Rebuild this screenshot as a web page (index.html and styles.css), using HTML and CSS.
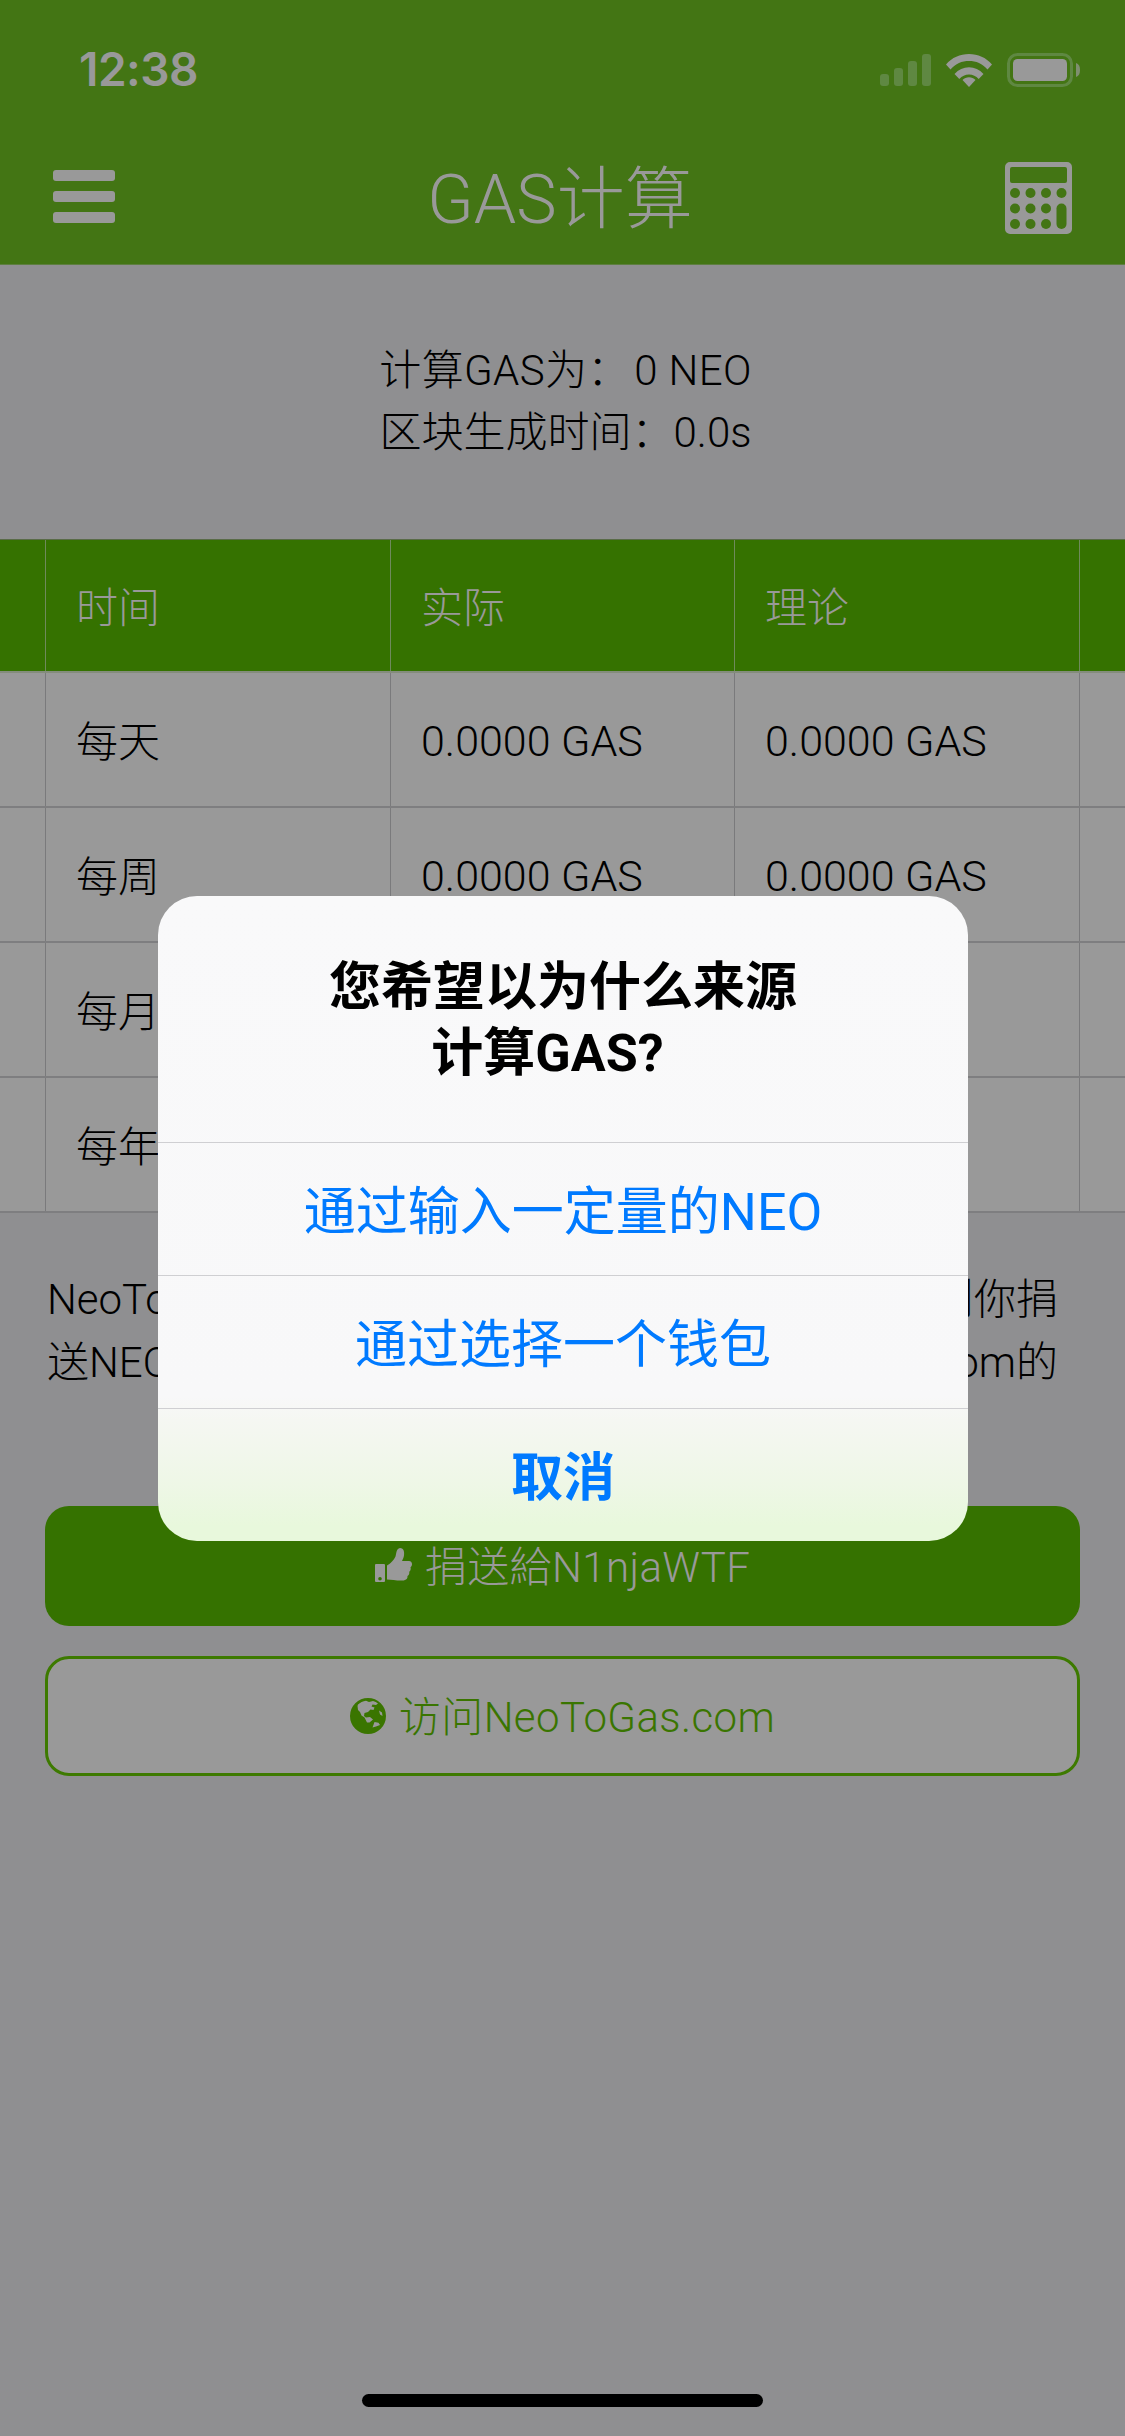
FILE: index.html
```html
<!DOCTYPE html>
<html lang="zh-CN">
<head>
<meta charset="utf-8">
<title>GAS计算</title>
<link rel="stylesheet" href="styles.css">
</head>
<body>
<div class="app">
  <header class="topbar">
    <div class="status">
      <span class="clock">12:38</span>
      <div class="status-icons">
        <svg class="signal" width="51" height="32" viewBox="0 0 51 32"><rect x="0" y="20" width="9" height="12" rx="3"/><rect x="14" y="14" width="9" height="18" rx="3"/><rect x="28" y="7" width="9" height="25" rx="3"/><rect x="42" y="0" width="9" height="32" rx="3"/></svg>
        <svg class="wifi" width="46" height="34" viewBox="0 0 46 34"><path d="M0 11.500C6 4.500 14 1 23 1s17 3.500 23 10.500l-4.500 5C36.500 10.500 30 8 23 8S9.500 10.500 4.500 16.500z"/><path d="M8.500 21C12.500 16.500 17.500 14.200 23 14.200S33.500 16.500 37.500 21l-4.800 5C30 23 26.800 21.500 23 21.500S16 23 13.300 26z"/><path d="M16.500 30c1.800-1.900 4-2.800 6.500-2.800s4.700.9 6.500 2.800L23 37z" transform="translate(0 -3)"/></svg>
        <svg class="battery" width="74" height="34" viewBox="0 0 74 34"><rect class="battery-shell" x="1.500" y="1.500" width="63" height="31" rx="9"/><rect class="battery-fill" x="6" y="6" width="54" height="22" rx="4.500"/><path class="battery-tip" d="M69 10c3 1 4 3.500 4 7s-1 6-4 7z"/></svg>
      </div>
    </div>
    <div class="navbar">
      <div class="menu-icon"><span></span><span></span><span></span></div>
      <h1 class="title">GAS计算</h1>
      <svg class="calc-icon" width="67" height="72" viewBox="0 0 67 72">
        <path fill-rule="evenodd" d="M5 0h57a5 5 0 0 1 5 5v62a5 5 0 0 1-5 5H5a5 5 0 0 1-5-5V5a5 5 0 0 1 5-5zM7 5a2 2 0 0 0-2 2v12a2 2 0 0 0 2 2h53a2 2 0 0 0 2-2V7a2 2 0 0 0-2-2z"/>
        <g class="calc-keys">
          <circle cx="10" cy="31" r="5"/><circle cx="25.500" cy="31" r="5"/><circle cx="41" cy="31" r="5"/><circle cx="56.500" cy="31" r="5"/>
          <circle cx="10" cy="46.500" r="5"/><circle cx="25.500" cy="46.500" r="5"/><circle cx="41" cy="46.500" r="5"/>
          <circle cx="10" cy="62" r="5"/><circle cx="25.500" cy="62" r="5"/><circle cx="41" cy="62" r="5"/>
          <rect x="51.500" y="41.500" width="10" height="25.500" rx="5"/>
        </g>
      </svg>
    </div>
  </header>

  <section class="summary">
    <p class="summary-gas">计算GAS为：&#8202;0 NEO</p>
    <p>区块生成时间：0.0s</p>
  </section>

  <section class="table">
    <div class="row head">
      <div class="cell"></div><div class="cell cell-zh">时间</div><div class="cell cell-zh">实际</div><div class="cell cell-zh">理论</div><div class="cell"></div>
    </div>
    <div class="row">
      <div class="cell"></div><div class="cell cell-zh">每天</div><div class="cell cell-num">0.0000 GAS</div><div class="cell cell-num">0.0000 GAS</div><div class="cell"></div>
    </div>
    <div class="row">
      <div class="cell"></div><div class="cell cell-zh">每周</div><div class="cell cell-num">0.0000 GAS</div><div class="cell cell-num">0.0000 GAS</div><div class="cell"></div>
    </div>
    <div class="row">
      <div class="cell"></div><div class="cell cell-zh">每月</div><div class="cell"></div><div class="cell"></div><div class="cell"></div>
    </div>
    <div class="row">
      <div class="cell"></div><div class="cell cell-zh">每年</div><div class="cell"></div><div class="cell"></div><div class="cell"></div>
    </div>
  </section>

  <section class="note">
    <div class="note-line"><span>NeoToGas计算器免费。</span><span>如果觉得它有用，则你捐</span></div>
    <div class="note-line"><span>送NEO以支持开发，</span><span>详情请见NeoToGas.com的</span></div>
  </section>

  <section class="actions">
    <a class="btn btn-solid">
      <svg width="37" height="37" viewBox="0 0 37 37"><path fill-rule="evenodd" d="M1 16h8a1 1 0 0 1 1 1v16a1 1 0 0 1-1 1H1a1 1 0 0 1-1-1V17a1 1 0 0 1 1-1zm4 13a1.800 1.800 0 1 0 0 3.600A1.800 1.800 0 0 0 5 29z"/><path d="M12 17.500c3-1.500 7-5.500 8.500-9C21.500 5.500 21 1 25 0c4 .2 4.500 4 4 7.500-.3 2-1.300 4-2 5.500h7c2 0 3 1.500 3 3.200 0 1.300-.7 2.400-1.500 3 .6 1.900 0 3.500-1.300 4.500.4 1.900-.2 3.500-1.700 4.400.2 2.400-1 4-3.700 4.300C23 33 17 31.500 12 31.500z"/></svg>
      <span class="btn-label">捐送給N1njaWTF</span>
    </a>
    <a class="btn btn-outline">
      <svg width="36" height="36" viewBox="0 0 36 36"><path fill-rule="evenodd" d="M18 0a18 18 0 1 1 0 36 18 18 0 0 1 0-36zM8 6.500c2-2 5-3.500 8-3.800l3 1.300 4-1c2 .6 3.500 1.300 5 2.500l-2 1.500-3.500-.5-1 2 3 1-1 2.500-3-.5-2.500 2.500-3.500 1-.5 3 2 1.500 4-.5 3 2.500-3.500 3-2.500 0-2.500-5-3-2-1.500-3.500-2-2-.5-4zM24.500 24l4 .7 1.500 2.300-4 1.500-3.500 1zM29 12.500l3 2 .5 3.500-2.500-1.500z"/></svg>
      <span class="btn-label">访问NeoToGas.com</span>
    </a>
  </section>

  <div class="home-indicator"></div>

  <div class="alert">
    <div class="alert-title">您希望以为什么来源<br>计算GAS?&nbsp;&nbsp;&#8202;</div>
    <div class="alert-action">通过输入一定量的NEO</div>
    <div class="alert-action">通过选择一个钱包</div>
    <div class="alert-action alert-cancel">取消</div>
  </div>
</div>
</body>
</html>
```

FILE: styles.css
```css
* { box-sizing: border-box; }
html, body { margin: 0; padding: 0; }
body {
  width: 1125px;
  height: 2436px;
  overflow: hidden;
  font-family: Roboto, "Noto Sans CJK SC", sans-serif;
  font-weight: 300;
  color: #000;
  background: #8f8f91;
}
.app {
  position: relative;
  width: 1125px;
  height: 2436px;
  display: flex;
  flex-direction: column;
  background: #8f8f91;
  overflow: hidden;
}
.topbar {
  height: 265px;
  flex: none;
  background: #437514;
  border-bottom: 1px solid #5e7f40;
  color: #999;
}
.status {
  height: 132px;
  padding: 5px 44px 0 79px;
  display: flex;
  align-items: center;
  justify-content: space-between;
}
.clock { font-family: Inter, sans-serif; font-size: 46px; font-weight: 600; letter-spacing: -0.5px; }
.status-icons { display: flex; align-items: center; gap: 15px; margin-top: 3px; }
.signal { fill: #5f8842; }
.wifi { fill: #999; }
.battery-shell { fill: none; stroke: #5f8842; stroke-width: 3; }
.battery-fill { fill: #999; }
.battery-tip { fill: #7f8f70; }
.navbar {
  height: 132px;
  padding: 0 53px;
  display: flex;
  align-items: center;
  justify-content: space-between;
}
.menu-icon { width: 62px; display: flex; flex-direction: column; gap: 10px; margin-top: -4px; }
.menu-icon span { height: 11px; border-radius: 3px; background: #999; }
.title { margin: 0; padding-top: 3px; font-size: 68px; font-weight: 300; line-height: 1; }
.calc-icon { fill: #999; }
.calc-keys { fill: #437514; }

.summary {
  height: 274px;
  flex: none;
  padding-left: 6px;
  display: flex;
  flex-direction: column;
  justify-content: center;
  align-items: center;
  font-size: 42px;
  line-height: 62px;
}
.summary p { margin: 0; }
.summary-gas { letter-spacing: 0.35px; }

.table { flex: none; border-top: 1px solid #596b47; }
.row {
  height: 135px;
  display: grid;
  grid-template-columns: 45px 345px 344px 345px 46px;
  border-bottom: 2px solid #7e7e80;
  background: #999;
  font-size: 42px;
}
.row.head { height: 133px; background: #357200; color: #999; border-bottom-color: #848d7c; }
.cell {
  display: flex;
  align-items: center;
  padding-left: 31px;
  border-left: 1px solid #7a7a7c;
}
.cell:first-child { border-left: none; padding: 0; }
.cell-zh { padding-left: 30px; padding-bottom: 3px; }
.cell-num { padding-left: 30px; padding-top: 2px; font-size: 43px; }
.head .cell { border-left-color: #6f8a5c; }

.note {
  flex: none;
  padding: 55px 67px 0 47px;
  height: 293px;
  font-size: 42px;
  line-height: 63px;
}
.note-line { display: flex; justify-content: space-between; white-space: nowrap; }

.actions { flex: none; padding: 0 45px; display: flex; flex-direction: column; gap: 30px; }
.btn {
  height: 120px;
  border-radius: 24px;
  display: flex;
  align-items: center;
  justify-content: center;
  gap: 13px;
  font-size: 42px;
}
.btn-label { padding-bottom: 6px; letter-spacing: 0.4px; }
.btn-solid { background: #357200; color: #999; fill: #999; }
.btn-outline { background: #999; border: 3px solid #3d7a00; color: #3a7500; fill: #3a7500; }

.home-indicator {
  position: absolute;
  left: 362px;
  top: 2394px;
  width: 401px;
  height: 13px;
  border-radius: 7px;
  background: #000;
}

.alert {
  position: absolute;
  left: 158px;
  top: 896px;
  width: 810px;
  height: 645px;
  border-radius: 39px;
  overflow: hidden;
  background: linear-gradient(180deg, #f9f9fa 0, #f8f8f9 500px, #f5f7f2 525px, #eef7e6 590px, #e8f8dc 630px);
  text-align: center;
}
.alert-title {
  height: 246px;
  padding-top: 3px;
  display: flex;
  align-items: center;
  justify-content: center;
  font-size: 52px;
  font-weight: 700;
  line-height: 66px;
  color: #000;
  white-space: pre-wrap;
}
.alert-action {
  height: 133px;
  padding-bottom: 4px;
  border-top: 1px solid #cfcfd2;
  display: flex;
  align-items: center;
  justify-content: center;
  font-size: 52px;
  font-weight: 400;
  color: #007aff;
}
.alert-cancel { font-weight: 700; }
```
